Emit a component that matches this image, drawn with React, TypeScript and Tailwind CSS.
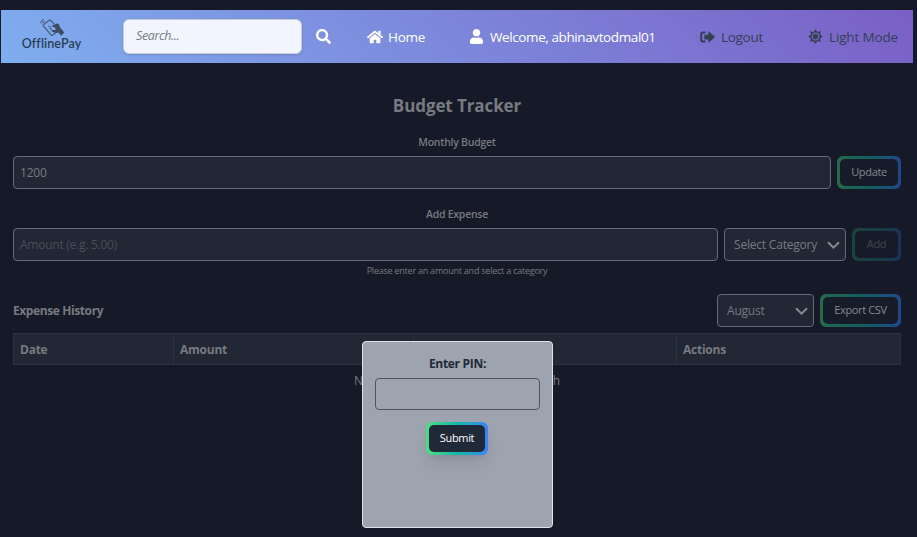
import type { ReactNode } from 'react';
import { FaSearch, FaHome, FaUser } from 'react-icons/fa';

const field = 'h-[33px] rounded border border-[#656b78] bg-[#212735] text-[#777a80]';

function GradientButton({ children, className = '', inner = 'bg-[#161c2a] text-[#85888e]', colors = 'from-[#27694a] via-[#135f60] to-[#21468a]' }: { children: ReactNode; className?: string; inner?: string; colors?: string }) {
  return (
    <button className={`h-[33px] shrink-0 rounded-md bg-gradient-to-r p-[3px] text-[11px] tracking-[-0.35px] ${colors} ${className}`}>
      <span className={`flex h-full items-center justify-center rounded-[5px] pb-px whitespace-nowrap ${inner}`}>{children}</span>
    </button>
  );
}

function Select({ children, className }: { children: ReactNode; className: string }) {
  return (
    <div className={`${field} flex shrink-0 items-center justify-between pr-[5px] pl-[9px] text-[12px] tracking-[-0.2px] whitespace-nowrap ${className}`}>
      {children}
      <svg width="13" height="8" viewBox="0 0 13 8" fill="none" stroke="#85898f" strokeWidth="2"><path d="M1 1.3 6.5 6.6 12 1.3" /></svg>
    </div>
  );
}

function Logo() {
  return (
    <div className="mr-px mb-[5px] ml-5 flex w-[61px] flex-col items-center text-[#293d55]">
      <svg width="26" height="19" viewBox="0 0 26 19" fill="none" stroke="#46586f" strokeWidth="1.1">
        <path d="M4.5 6.5 10.3 2.2Q11 1.8 11.7 2.5L15.5 6.2M4.5 6.5Q3.8 7.1 4.3 7.9L12.3 17Q13 17.7 13.8 17.1L17.5 14" />
        <path strokeWidth="1" d="M2 5.2Q1.4 2.2 5 1.4M3.6 5.2Q3.4 3.5 5.4 3.1M9.2 8l2.4 1.2-.6 1.4 2.2.8" />
        <path fill="#3d4d62" stroke="none" d="M13.2 7.4 18 5.6q1.2-.2 2 .8l1.2 3 4 5-2.8 3.4-3.2-3.2q-2 .6-4-.2l-2.6-1.2q-.6-.9.4-1.3l3.8.2-.8-2.6-2.6-.9q-.8-.7-.2-1.2Z" />
      </svg>
      <span className="font-['Lato'] text-[12.5px] leading-[13px] font-semibold tracking-[0.1px] whitespace-nowrap">OfflinePay</span>
    </div>
  );
}

function Sun() {
  return (
    <svg width="15" height="15" viewBox="0 0 16 16" fill="none" stroke="#334155">
      <circle cx="8" cy="8" r="4.9" strokeWidth="1.5" />
      <circle cx="8" cy="8" r="3" fill="#334155" stroke="none" />
      <path fill="#334155" stroke="none" d="M8 0 9.8 3.2H6.2ZM8 16 6.2 12.8H9.8ZM0 8 3.2 6.2V9.8ZM16 8 12.8 9.8V6.2ZM2.3 2.3 5.8 3.3 3.3 5.8ZM13.7 2.3 12.7 5.8 10.2 3.3ZM2.3 13.7 3.3 10.2 5.8 12.7ZM13.7 13.7 10.2 12.7 12.7 10.2Z" />
    </svg>
  );
}

function Logout() {
  return (
    <svg className="ml-[44px] shrink-0" width="15" height="12" viewBox="0 0 15 12" fill="#334155">
      <path d="M5.4.5v2H3.2Q2.2 2.5 2.2 3.5v5q0 1 1 1h2.2v2H3Q.2 11.5.2 8.7V3.3Q.2.5 3 .5Z" />
      <path d="M8.4 1.2q0-1 .8-.4l5.2 4.5q.7.7 0 1.4L9.2 11.2q-.8.6-.8-.4V8.4H5q-.7 0-.7-.7V4.4q0-.7.7-.7h3.4Z" />
    </svg>
  );
}

export default function App() {
  return (
    <div className="h-[537px] w-[917px] overflow-hidden bg-[#161928] pt-[10px] pl-px font-['Open_Sans','Noto_Sans',sans-serif] text-[#777a80]">
      <nav className="flex h-[53px] w-[912px] items-center bg-[linear-gradient(45deg,#7faef0,#7a5fc5)] text-[13.5px] whitespace-nowrap text-white">
        <Logo />
        <div className="ml-10 flex h-[35px] w-[179px] shrink-0 items-center rounded-md border border-[#c8cbd6] bg-[#f2f5fe] pl-3 text-[12.5px] tracking-[-0.4px] text-[#777b84] italic shadow">Search...</div>
        <FaSearch className="ml-[14px] size-[15px] shrink-0" />
        <FaHome className="ml-[36px] size-4 shrink-0" />
        <span className="ml-[5px] w-[37px] pt-px tracking-[-0.3px]">Home</span>
        <FaUser className="ml-[44px] size-[15px] shrink-0" />
        <span className="ml-[6px] w-[166px] pt-px tracking-[-0.4px]">Welcome, abhinavtodmal01</span>
        <Logout />
        <span className="ml-[6px] w-[43px] pt-px tracking-[-0.3px] text-[#334155]">Logout</span>
        <span className="ml-[44px]"><Sun /></span>
        <span className="ml-[6px] pt-px tracking-[-0.15px] text-[#334155]">Light Mode</span>
      </nav>
      <main className="w-[912px] px-3">
        <h1 className="pt-[30px] text-center text-[17px] leading-[26px] font-bold tracking-[-0.1px]">Budget Tracker</h1>
        <h2 className="mt-[15px] text-center text-[10.5px] leading-4 font-semibold tracking-[-0.25px]">Monthly Budget</h2>
        <div className="mt-[6px] flex gap-1.5">
          <div className={`${field} flex flex-1 items-center pl-1.5 text-[12px] tracking-[-0.2px]`}>1200</div>
          <GradientButton className="w-16">Update</GradientButton>
        </div>
        <h2 className="mt-[17px] text-center text-[10.5px] leading-4 font-semibold tracking-[-0.25px]">Add Expense</h2>
        <div className="mt-[6px] flex gap-1.5">
          <div className={`${field} flex flex-1 items-center pl-1.5 text-[12px] tracking-[-0.25px]`}><span className="text-[#474d59]">Amount (e.g. 5.00)</span></div>
          <Select className="w-[122px]">Select Category</Select>
          <GradientButton className="w-[49px]" colors="from-[#1e4239] via-[#153d44] to-[#1c3259]" inner="bg-[#161b2a] text-[#3f444e]">Add</GradientButton>
        </div>
        <p className="mt-[3px] text-center text-[9px] leading-[14px] tracking-[-0.23px]">Please enter an amount and select a category</p>
        <div className="mt-4 flex items-center gap-1.5">
          <h2 className="flex-1 text-[12px] font-bold tracking-[-0.4px]">Expense History</h2>
          <Select className="w-[97px]">August</Select>
          <GradientButton className="w-[81px]">Export CSV</GradientButton>
        </div>
        <div className="mt-[6px] grid h-8 grid-cols-[160px_240px_263px_225px] items-stretch border border-[#293241] bg-[#212735] text-[12px] font-bold tracking-[-0.25px]">
          {['Date', 'Amount', '', 'Actions'].map((h, i) => (
            <div key={i} className={`flex items-center pt-px pl-1.5 ${i < 3 ? 'border-r border-[#293241]' : ''}`}>{h}</div>
          ))}
        </div>
        <p className="mt-[7px] text-center text-[12px] leading-[18px] tracking-[-0.1px]">No expenses recorded for this month</p>
      </main>
      <div className="fixed top-[341px] left-[362px] flex h-[187px] w-[191px] flex-col items-center rounded border border-[#e0e2e6] bg-[#9da3af] px-3 pt-[13px]">
        <label className="text-[12px] leading-[18px] font-bold tracking-[-0.3px] text-[#1f2937]">Enter PIN:</label>
        <div className="mt-[5px] h-8 w-full rounded border border-[#4b5563]" />
        <GradientButton className="mt-3 mr-px w-[62px] shadow-lg" colors="from-[#4ade80] via-[#14b8a6] to-[#3b82f6]" inner="bg-[#1f2937] text-white">Submit</GradientButton>
      </div>
    </div>
  );
}
